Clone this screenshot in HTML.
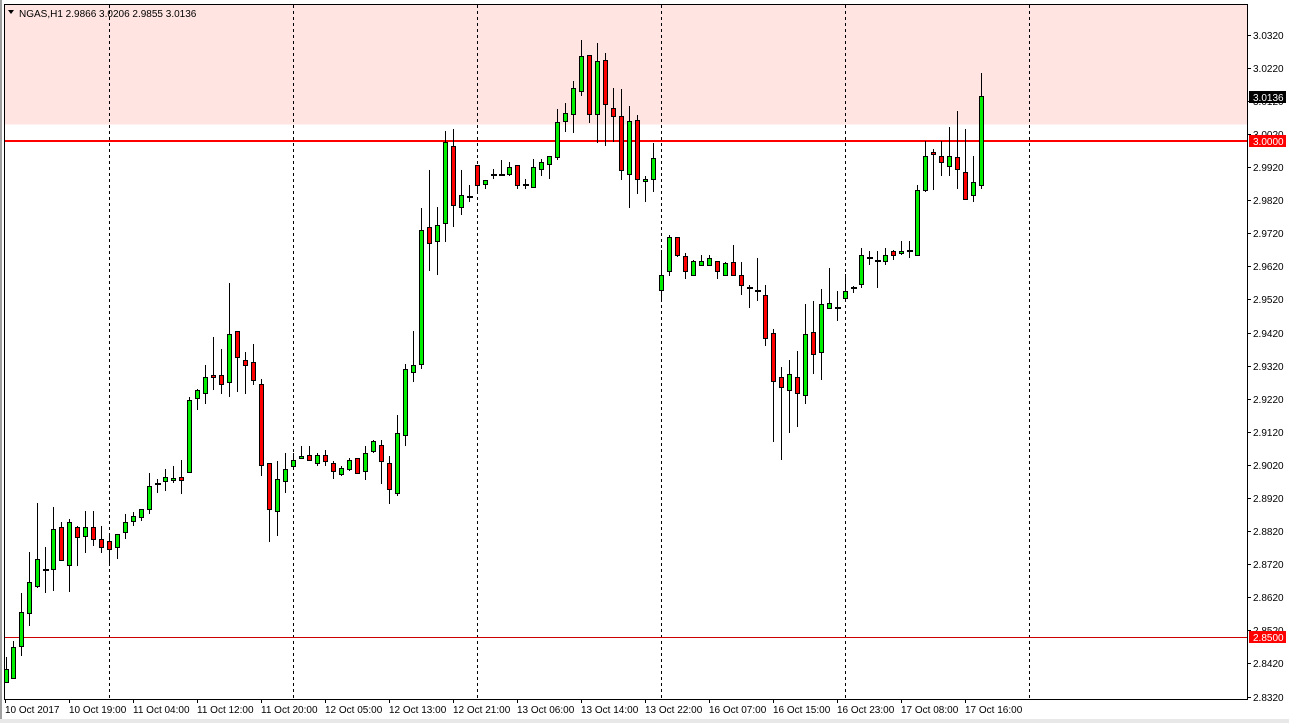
<!DOCTYPE html>
<html><head><meta charset="utf-8"><style>
html,body{margin:0;padding:0;background:#fff;}
svg{display:block;font-family:"Liberation Sans",sans-serif;font-size:10px;}
</style></head><body>
<svg width="1289" height="723" viewBox="0 0 1289 723" xmlns="http://www.w3.org/2000/svg">
<rect x="0" y="0" width="1289" height="723" fill="#fff"/>
<rect x="0" y="0" width="2" height="723" fill="#a0a0a0"/>
<rect x="0" y="719" width="1289" height="4" fill="#e8e8e8"/>
<rect x="4.5" y="4.5" width="1243" height="120" fill="#ffe4e1"/>
<g stroke="#000" stroke-dasharray="3,3" stroke-width="1">
<path d="M109.5 5V699M293.5 5V699M477.5 5V699M661.5 5V699M845.5 5V699M1029.5 5V699"/>
</g>
<path d="M4 141H1247" stroke="#f00" stroke-width="2"/>
<path d="M4 637.5H1247" stroke="#c00" stroke-width="1"/>
<rect x="4.5" y="4.5" width="1243" height="695" fill="none" stroke="#000"/>
<path d="M8 10l3 4 3-4z" fill="#000"/>
<text x="19" y="17" fill="#000">NGAS,H1  2.9866 3.0206 2.9855 3.0136</text>
<g stroke="#000" stroke-width="1">
<path d="M6.5 657V683M13.5 641V678M21.5 593V656M29.5 552V626M37.5 503V588M45.5 547V593M53.5 507V591M61.5 522V560M69.5 519V592M77.5 526V566M85.5 511V553M93.5 511V546M101.5 526V553M109.5 536V565M117.5 534V559M125.5 514V539M133.5 512V526M141.5 509V521M149.5 473V514M157.5 479V493M165.5 469V491M173.5 466V483M181.5 460V494M189.5 397V473M197.5 389V410M205.5 365V404M213.5 337V390M221.5 349V394M229.5 283V397M237.5 331V392M245.5 352V394M253.5 344V385M261.5 379V476M269.5 463V542M277.5 461V536M285.5 453V493M293.5 453V469M301.5 446V458M309.5 446V460M317.5 453V466M325.5 450V466M333.5 461V479M341.5 466V476M349.5 458V471M357.5 458V474M365.5 446V480M373.5 440V453M381.5 440V484M389.5 456V504M397.5 415V496M405.5 364V446M413.5 331V382M421.5 208V369M429.5 170V271M437.5 207V275M445.5 131V242M453.5 129V227M461.5 170V215M469.5 185V202M477.5 165V192M485.5 180V189M493.5 169V179M501.5 160V176M509.5 162V176M517.5 165V189M525.5 179V189M533.5 159V187M541.5 159V176M549.5 156V179M557.5 109V160M565.5 103V132M573.5 81V133M581.5 40V96M589.5 55V123M597.5 43V143M605.5 53V146M613.5 88V142M621.5 89V180M629.5 106V208M637.5 115V194M645.5 176V202M653.5 143V192M661.5 250V300M669.5 235V276M677.5 237V257M685.5 253V279M693.5 260V276M701.5 255V265M709.5 255V265M717.5 261V279M725.5 262V276M733.5 245V275M741.5 262V295M749.5 285V308M757.5 258V301M765.5 285V346M773.5 329V442M781.5 367V460M789.5 360V433M797.5 351V427M805.5 304V404M813.5 301V374M821.5 289V380M829.5 268V308M837.5 291V321M845.5 274V301M853.5 286V293M861.5 248V288M869.5 251V265M877.5 251V288M885.5 248V265M893.5 250V260M901.5 241V255M909.5 241V258M917.5 185V255M925.5 141V192M933.5 149V190M941.5 141V176M949.5 127V176M957.5 111V189M965.5 129V199M973.5 156V202M981.5 73V189"/>
<path stroke-width="2" d="M43 570H49M155 484H161M467 197H473M491 175H497M499 175H505M523 185H529M747 288H753M755 291H761M835 308H841M851 288H857M867 258H873M875 261H881M907 251H913"/>
</g>
<g stroke="#000" stroke-width="1" fill="#00ee00">
<rect x="4.5" y="669.5" width="4" height="13"/>
<rect x="11.5" y="647.5" width="4" height="31"/>
<rect x="19.5" y="612.5" width="4" height="34"/>
<rect x="27.5" y="582.5" width="4" height="31"/>
<rect x="35.5" y="559.5" width="4" height="27"/>
<rect x="51.5" y="529.5" width="4" height="40"/>
<rect x="67.5" y="522.5" width="4" height="43"/>
<rect x="83.5" y="527.5" width="4" height="9"/>
<rect x="115.5" y="534.5" width="4" height="13"/>
<rect x="123.5" y="522.5" width="4" height="10"/>
<rect x="131.5" y="516.5" width="4" height="5"/>
<rect x="139.5" y="509.5" width="4" height="8"/>
<rect x="147.5" y="486.5" width="4" height="23"/>
<rect x="163.5" y="477.5" width="4" height="4"/>
<rect x="171.5" y="478.5" width="4" height="2"/>
<rect x="187.5" y="400.5" width="4" height="72"/>
<rect x="195.5" y="390.5" width="4" height="8"/>
<rect x="203.5" y="377.5" width="4" height="16"/>
<rect x="227.5" y="334.5" width="4" height="48"/>
<rect x="275.5" y="479.5" width="4" height="32"/>
<rect x="283.5" y="469.5" width="4" height="12"/>
<rect x="291.5" y="460.5" width="4" height="6"/>
<rect x="299.5" y="456.5" width="4" height="2"/>
<rect x="315.5" y="455.5" width="4" height="8"/>
<rect x="339.5" y="468.5" width="4" height="6"/>
<rect x="347.5" y="460.5" width="4" height="9"/>
<rect x="363.5" y="453.5" width="4" height="18"/>
<rect x="371.5" y="441.5" width="4" height="10"/>
<rect x="395.5" y="433.5" width="4" height="60"/>
<rect x="403.5" y="369.5" width="4" height="66"/>
<rect x="411.5" y="365.5" width="4" height="7"/>
<rect x="419.5" y="230.5" width="4" height="134"/>
<rect x="435.5" y="225.5" width="4" height="16"/>
<rect x="443.5" y="142.5" width="4" height="81"/>
<rect x="459.5" y="195.5" width="4" height="12"/>
<rect x="483.5" y="180.5" width="4" height="4"/>
<rect x="507.5" y="167.5" width="4" height="7"/>
<rect x="531.5" y="167.5" width="4" height="20"/>
<rect x="539.5" y="162.5" width="4" height="7"/>
<rect x="547.5" y="156.5" width="4" height="8"/>
<rect x="555.5" y="122.5" width="4" height="35"/>
<rect x="563.5" y="113.5" width="4" height="8"/>
<rect x="571.5" y="88.5" width="4" height="26"/>
<rect x="579.5" y="56.5" width="4" height="35"/>
<rect x="595.5" y="61.5" width="4" height="53"/>
<rect x="627.5" y="121.5" width="4" height="53"/>
<rect x="643.5" y="179.5" width="4" height="2"/>
<rect x="651.5" y="158.5" width="4" height="21"/>
<rect x="659.5" y="275.5" width="4" height="15"/>
<rect x="667.5" y="237.5" width="4" height="34"/>
<rect x="691.5" y="261.5" width="4" height="14"/>
<rect x="699.5" y="261.5" width="4" height="4"/>
<rect x="707.5" y="258.5" width="4" height="7"/>
<rect x="723.5" y="263.5" width="4" height="12"/>
<rect x="787.5" y="374.5" width="4" height="16"/>
<rect x="803.5" y="334.5" width="4" height="61"/>
<rect x="819.5" y="304.5" width="4" height="48"/>
<rect x="827.5" y="303.5" width="4" height="5"/>
<rect x="843.5" y="291.5" width="4" height="7"/>
<rect x="859.5" y="255.5" width="4" height="29"/>
<rect x="883.5" y="255.5" width="4" height="6"/>
<rect x="899.5" y="251.5" width="4" height="2"/>
<rect x="915.5" y="190.5" width="4" height="65"/>
<rect x="923.5" y="156.5" width="4" height="34"/>
<rect x="947.5" y="156.5" width="4" height="10"/>
<rect x="971.5" y="182.5" width="4" height="13"/>
<rect x="979.5" y="96.5" width="4" height="89"/>
</g>
<g stroke="#000" stroke-width="1" fill="#ff0000">
<rect x="59.5" y="527.5" width="4" height="33"/>
<rect x="75.5" y="527.5" width="4" height="10"/>
<rect x="91.5" y="527.5" width="4" height="12"/>
<rect x="99.5" y="539.5" width="4" height="8"/>
<rect x="107.5" y="541.5" width="4" height="8"/>
<rect x="179.5" y="477.5" width="4" height="3"/>
<rect x="211.5" y="375.5" width="4" height="2"/>
<rect x="219.5" y="375.5" width="4" height="9"/>
<rect x="235.5" y="331.5" width="4" height="26"/>
<rect x="243.5" y="360.5" width="4" height="5"/>
<rect x="251.5" y="362.5" width="4" height="18"/>
<rect x="259.5" y="384.5" width="4" height="81"/>
<rect x="267.5" y="463.5" width="4" height="46"/>
<rect x="307.5" y="455.5" width="4" height="5"/>
<rect x="323.5" y="455.5" width="4" height="6"/>
<rect x="331.5" y="463.5" width="4" height="8"/>
<rect x="355.5" y="458.5" width="4" height="15"/>
<rect x="379.5" y="445.5" width="4" height="16"/>
<rect x="387.5" y="463.5" width="4" height="26"/>
<rect x="427.5" y="227.5" width="4" height="16"/>
<rect x="451.5" y="146.5" width="4" height="59"/>
<rect x="475.5" y="165.5" width="4" height="20"/>
<rect x="515.5" y="165.5" width="4" height="20"/>
<rect x="587.5" y="55.5" width="4" height="59"/>
<rect x="603.5" y="60.5" width="4" height="44"/>
<rect x="611.5" y="108.5" width="4" height="8"/>
<rect x="619.5" y="116.5" width="4" height="54"/>
<rect x="635.5" y="120.5" width="4" height="59"/>
<rect x="675.5" y="237.5" width="4" height="18"/>
<rect x="683.5" y="256.5" width="4" height="15"/>
<rect x="715.5" y="261.5" width="4" height="10"/>
<rect x="731.5" y="262.5" width="4" height="13"/>
<rect x="739.5" y="275.5" width="4" height="10"/>
<rect x="763.5" y="295.5" width="4" height="43"/>
<rect x="771.5" y="333.5" width="4" height="48"/>
<rect x="779.5" y="377.5" width="4" height="10"/>
<rect x="795.5" y="377.5" width="4" height="16"/>
<rect x="811.5" y="332.5" width="4" height="22"/>
<rect x="891.5" y="251.5" width="4" height="4"/>
<rect x="931.5" y="152.5" width="4" height="2"/>
<rect x="939.5" y="156.5" width="4" height="6"/>
<rect x="955.5" y="157.5" width="4" height="12"/>
<rect x="963.5" y="172.5" width="4" height="27"/>
</g>
<g stroke="#000">
<path d="M1247 35.5h4M1247 68.5h4M1247 101.5h4M1247 134.5h4M1247 167.5h4M1247 200.5h4M1247 233.5h4M1247 266.5h4M1247 299.5h4M1247 333.5h4M1247 366.5h4M1247 399.5h4M1247 432.5h4M1247 465.5h4M1247 498.5h4M1247 531.5h4M1247 564.5h4M1247 597.5h4M1247 630.5h4M1247 663.5h4M1247 697.5h4"/>
<path d="M5.5 699v4M69.5 699v4M133.5 699v4M197.5 699v4M261.5 699v4M325.5 699v4M389.5 699v4M453.5 699v4M517.5 699v4M581.5 699v4M645.5 699v4M709.5 699v4M773.5 699v4M837.5 699v4M901.5 699v4M965.5 699v4"/>
</g>
<g fill="#000">
<text x="1253" y="39">3.0320</text>
<text x="1253" y="72">3.0220</text>
<text x="1253" y="105">3.0120</text>
<text x="1253" y="138">3.0020</text>
<text x="1253" y="171">2.9920</text>
<text x="1253" y="204">2.9820</text>
<text x="1253" y="237">2.9720</text>
<text x="1253" y="270">2.9620</text>
<text x="1253" y="303">2.9520</text>
<text x="1253" y="337">2.9420</text>
<text x="1253" y="370">2.9320</text>
<text x="1253" y="403">2.9220</text>
<text x="1253" y="436">2.9120</text>
<text x="1253" y="469">2.9020</text>
<text x="1253" y="502">2.8920</text>
<text x="1253" y="535">2.8820</text>
<text x="1253" y="568">2.8720</text>
<text x="1253" y="601">2.8620</text>
<text x="1253" y="634">2.8520</text>
<text x="1253" y="667">2.8420</text>
<text x="1253" y="701">2.8320</text>
</g>
<rect x="1249" y="91" width="37" height="12" fill="#000"/>
<text x="1253" y="101" fill="#fff">3.0136</text>
<rect x="1249" y="135" width="37" height="12" fill="#f00"/>
<text x="1253" y="145" fill="#fff">3.0000</text>
<rect x="1249" y="631" width="37" height="12" fill="#f00"/>
<text x="1253" y="641" fill="#fff">2.8500</text>
<g fill="#000">
<text x="5" y="713">10 Oct 2017</text>
<text x="69" y="713">10 Oct 19:00</text>
<text x="133" y="713">11 Oct 04:00</text>
<text x="197" y="713">11 Oct 12:00</text>
<text x="261" y="713">11 Oct 20:00</text>
<text x="325" y="713">12 Oct 05:00</text>
<text x="389" y="713">12 Oct 13:00</text>
<text x="453" y="713">12 Oct 21:00</text>
<text x="517" y="713">13 Oct 06:00</text>
<text x="581" y="713">13 Oct 14:00</text>
<text x="645" y="713">13 Oct 22:00</text>
<text x="709" y="713">16 Oct 07:00</text>
<text x="773" y="713">16 Oct 15:00</text>
<text x="837" y="713">16 Oct 23:00</text>
<text x="901" y="713">17 Oct 08:00</text>
<text x="965" y="713">17 Oct 16:00</text>
</g>
</svg>
</body></html>
